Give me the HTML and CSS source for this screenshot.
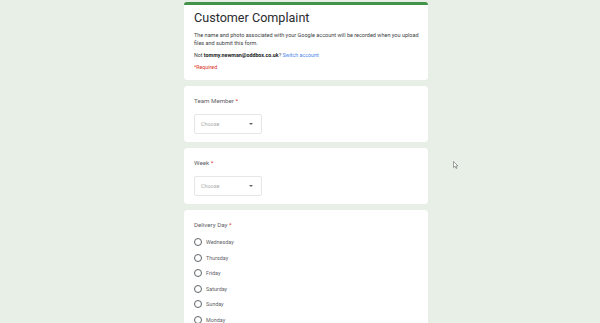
FILE: index.html
```html
<!DOCTYPE html>
<html>
<head>
  <title>Customer Complaint</title>
  <link rel="stylesheet" href="styles.css">
</head>
<body>

<div class="form">
  <div class="card header">
    <h1>Customer Complaint</h1>
    <p class="desc">The name and photo associated with your Google account will be recorded when you upload<br>files and submit this form.</p>
    <p class="account">Not <b>tommy.newman@oddbox.co.uk</b>? <a href="#">Switch account</a></p>
    <p class="required">*Required</p>
  </div>

  <div class="card">
    <div class="label">Team Member <span class="star">*</span></div>
    <div class="select">
      <span>Choose</span>
      <span class="arrow"></span>
    </div>
  </div>

  <div class="card">
    <div class="label">Week <span class="star">*</span></div>
    <div class="select">
      <span>Choose</span>
      <span class="arrow"></span>
    </div>
  </div>

  <div class="card days">
    <div class="label">Delivery Day <span class="star">*</span></div>
    <div class="options">
      <label class="option"><span class="radio"></span>Wednesday</label>
      <label class="option"><span class="radio"></span>Thursday</label>
      <label class="option"><span class="radio"></span>Friday</label>
      <label class="option"><span class="radio"></span>Saturday</label>
      <label class="option"><span class="radio"></span>Sunday</label>
      <label class="option"><span class="radio"></span>Monday</label>
    </div>
  </div>
</div>

<svg class="cursor" width="6" height="8" viewBox="0 0 6 8">
  <path d="M0.5 0.5 L0.5 6.5 L2 5.2 L3.2 7.5 L4 7.1 L2.9 4.9 L4.9 4.9 Z" fill="#fff" stroke="#666" stroke-width="0.6"/>
</svg>

</body>
</html>
```

FILE: styles.css
```css
body {
  margin: 0;
  height: 323px;
  overflow: hidden;
  background-color: #e7efe7;
  font-family: Roboto, "Liberation Sans", sans-serif;
  color: #3c4043;
}
.form {
  width: 244px;
  margin-left: 184px;
  padding-top: 2px;
}
.card {
  background: #fff;
  border-radius: 3px;
  box-shadow: 0 0 1px rgba(0, 0, 0, 0.06);
  padding: 11px 10px 0 10px;
  height: 45px;
  margin-bottom: 6px;
}
.header {
  border-top: 3px solid #43934a;
  padding-top: 4px;
  height: 71px;
}
h1 {
  margin: 0;
  font-weight: 400;
  font-size: 12.6px;
  line-height: 18px;
  color: #2a2c2f;
}
.desc {
  margin: 4px 0 0 0;
  font-size: 5.5px;
  line-height: 8px;
  white-space: nowrap;
}
.account {
  margin: 4px 0 0 0;
  font-size: 5.3px;
  line-height: 8px;
}
.account b {
  color: #202124;
}
.account a {
  color: #4a86e8;
  text-decoration: none;
}
.required {
  margin: 4px 0 0 0;
  font-size: 5.3px;
  line-height: 8px;
  color: #d93025;
}
.label {
  font-size: 6.2px;
  line-height: 8px;
  color: #5f6368;
}
.star {
  color: #d93025;
}
.select {
  margin-top: 9px;
  width: 68px;
  height: 20px;
  border: 1px solid #e6e6e6;
  border-radius: 2px;
  display: flex;
  align-items: center;
  justify-content: space-between;
  padding: 0 8px 0 6px;
  box-sizing: border-box;
  font-size: 5.4px;
  color: #a8a8a8;
}
.arrow {
  width: 0;
  height: 0;
  border-left: 2px solid transparent;
  border-right: 2px solid transparent;
  border-top: 2px solid #5f6368;
}
.days {
  height: 105px;
}
.options {
  margin-top: 9px;
  display: flex;
  flex-direction: column;
  gap: 7.5px;
}
.option {
  display: flex;
  align-items: center;
  font-size: 5.4px;
  line-height: 8px;
  color: #5f6368;
}
.radio {
  width: 6px;
  height: 6px;
  border: 1.2px solid #5f6368;
  border-radius: 50%;
  margin-right: 4px;
}
.cursor {
  position: absolute;
  left: 453px;
  top: 161px;
}
```
